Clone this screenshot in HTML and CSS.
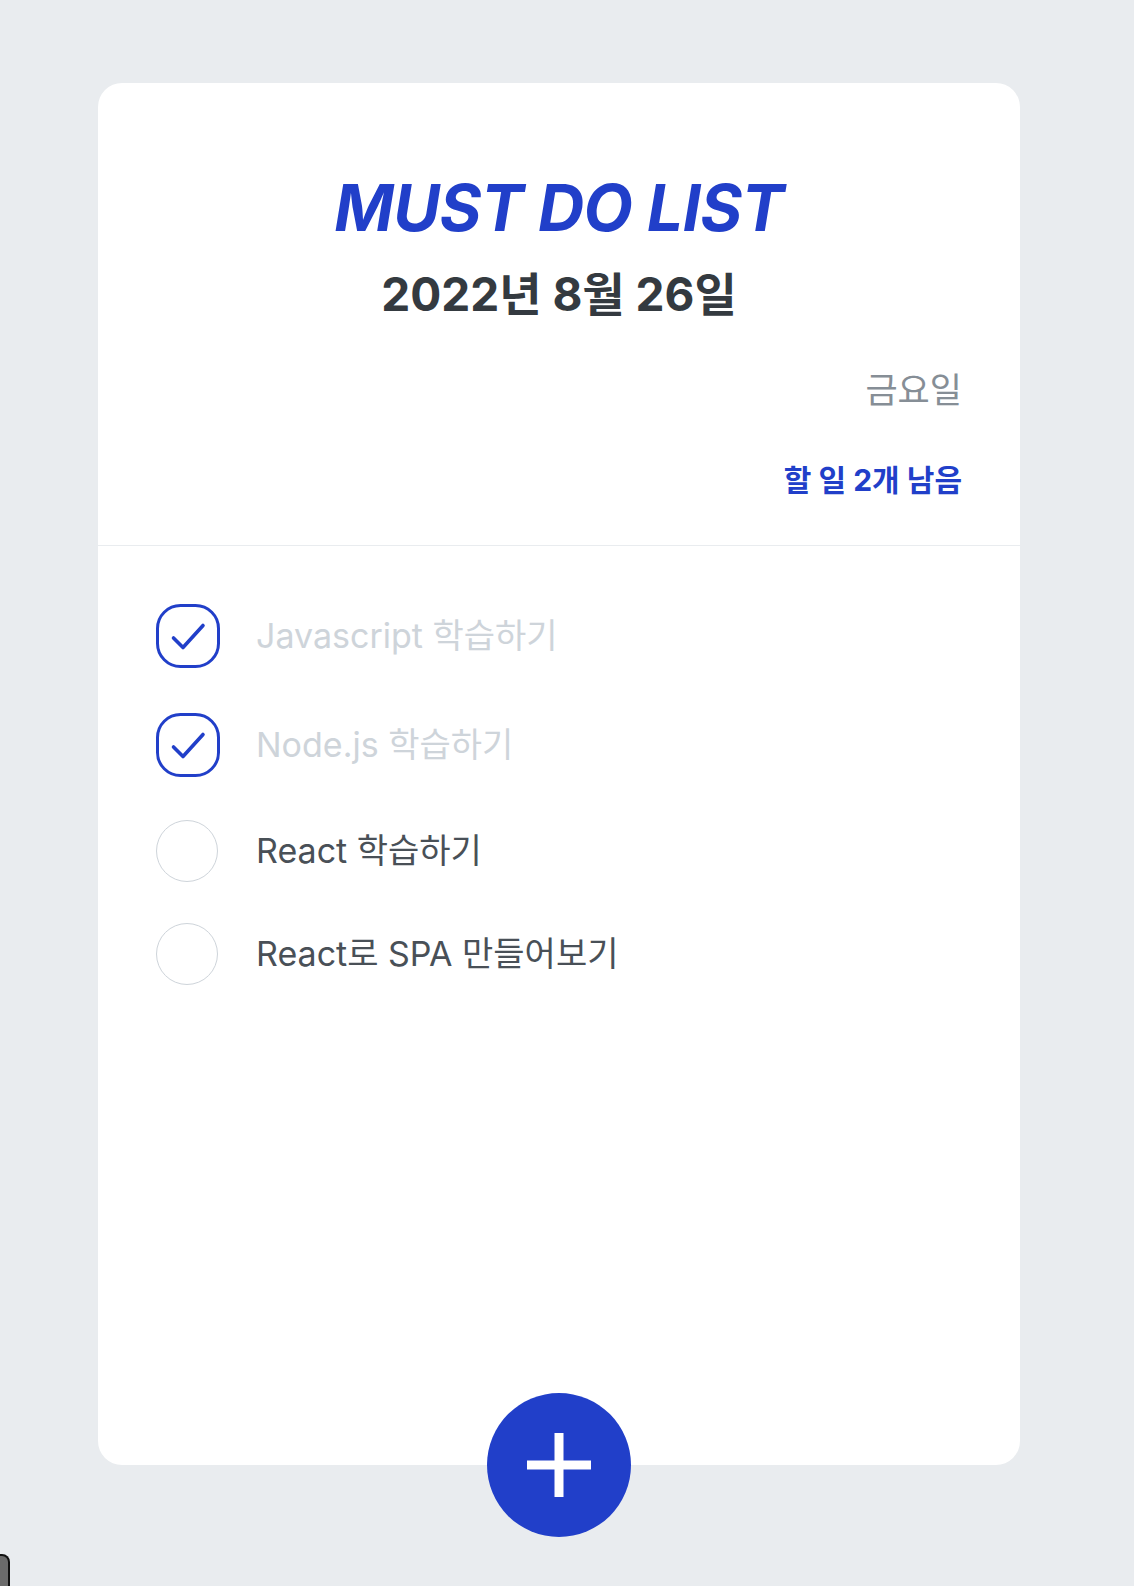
FILE: index.html
```html
<!DOCTYPE html>
<html lang="ko">
<head>
<meta charset="utf-8">
<title>MUST DO LIST</title>
<link rel="stylesheet" href="styles.css">
</head>
<body>
<div class="page">
  <div class="card">
    <div class="header">
      <h1 class="title">MUST DO LIST</h1>
      <h2 class="date">2022년 8월 26일</h2>
      <div class="meta">
        <div class="day">금요일</div>
        <div class="count">할 일 2개 남음</div>
      </div>
    </div>
    <div class="list">
      <div class="item done">
        <div class="check">
          <svg width="64" height="64" viewBox="0 0 64 64"><rect x="1.5" y="1.5" width="61" height="61" rx="23" fill="none" stroke="#213fc9" stroke-width="3"/><path d="M17.5 34 L27 43.5 L47 21.5" fill="none" stroke="#213fc9" stroke-width="3.6" stroke-linecap="round" stroke-linejoin="round"/></svg>
        </div>
        <div class="text">Javascript 학습하기</div>
      </div>
      <div class="item done">
        <div class="check">
          <svg width="64" height="64" viewBox="0 0 64 64"><rect x="1.5" y="1.5" width="61" height="61" rx="23" fill="none" stroke="#213fc9" stroke-width="3"/><path d="M17.5 34 L27 43.5 L47 21.5" fill="none" stroke="#213fc9" stroke-width="3.6" stroke-linecap="round" stroke-linejoin="round"/></svg>
        </div>
        <div class="text">Node.js 학습하기</div>
      </div>
      <div class="item">
        <div class="check"><span class="circle"></span></div>
        <div class="text">React 학습하기</div>
      </div>
      <div class="item">
        <div class="check"><span class="circle"></span></div>
        <div class="text">React로 SPA 만들어보기</div>
      </div>
    </div>
    <button class="add" type="button" aria-label="추가">
      <svg width="64" height="64" viewBox="0 0 64 64"><rect x="27.5" y="0" width="9" height="64" fill="#fff"/><rect x="0" y="27.5" width="64" height="9" fill="#fff"/></svg>
    </button>
  </div>
</div>
<div class="edge-tab"></div>
</body>
</html>
```
FILE: styles.css
```css
* { box-sizing: border-box; }
html, body { margin: 0; padding: 0; }
body {
  background: #e9ecef;
  font-family: "Inter", "Noto Sans CJK KR", sans-serif;
  min-height: 1586px;
  overflow: hidden;
}
.page {
  display: flex;
  justify-content: center;
  padding-top: 83px;
  padding-right: 16px;
}
.card {
  position: relative;
  width: 922px;
  height: 1382px;
  background: #fff;
  border-radius: 24px;
  display: flex;
  flex-direction: column;
}
.header {
  padding: 93px 58px 45px;
  border-bottom: 1px solid #e9ecef;
}
.title {
  margin: 0;
  font-size: 64px;
  line-height: 64px;
  font-weight: 700;
  font-style: italic;
  color: #213fc9;
  text-align: center;
  letter-spacing: -0.5px;
}
.date {
  margin: 30px 0 0;
  font-size: 46px;
  line-height: 49px;
  font-weight: 700;
  color: #343a40;
  text-align: center;
}
.meta {
  display: flex;
  flex-direction: column;
  align-items: flex-end;
  margin-top: 46px;
}
.day {
  font-size: 35px;
  line-height: 50px;
  color: #868e96;
}
.count {
  margin-top: 45px;
  font-size: 30px;
  line-height: 40px;
  font-weight: 700;
  color: #213fc9;
}
.list {
  padding: 35px 58px 0;
  display: flex;
  flex-direction: column;
}
.item {
  display: flex;
  align-items: center;
  height: 103px;
}
.item.done { height: 109px; }
.check {
  width: 64px;
  height: 64px;
  display: flex;
  align-items: center;
  justify-content: flex-start;
  flex: none;
}
.check svg { display: block; }
.circle {
  display: block;
  width: 62px;
  height: 62px;
  border-radius: 50%;
  border: 1px solid #ced4da;
}
.text {
  margin-left: 36px;
  font-size: 34px;
  line-height: 44px;
  color: #495057;
}
.item.done .text { color: #ced4da; }
.add {
  position: absolute;
  left: 50%;
  bottom: -72px;
  width: 144px;
  height: 144px;
  margin-left: -72px;
  border: none;
  padding: 0;
  border-radius: 50%;
  background: #213fc9;
  display: flex;
  align-items: center;
  justify-content: center;
  cursor: pointer;
}
.add svg { display: block; }
.edge-tab {
  position: fixed;
  left: 0;
  top: 1554px;
  width: 10px;
  height: 40px;
  background: #6b6b6b;
  border: 2px solid #111;
  border-left: none;
  border-top-right-radius: 8px;
}
```
